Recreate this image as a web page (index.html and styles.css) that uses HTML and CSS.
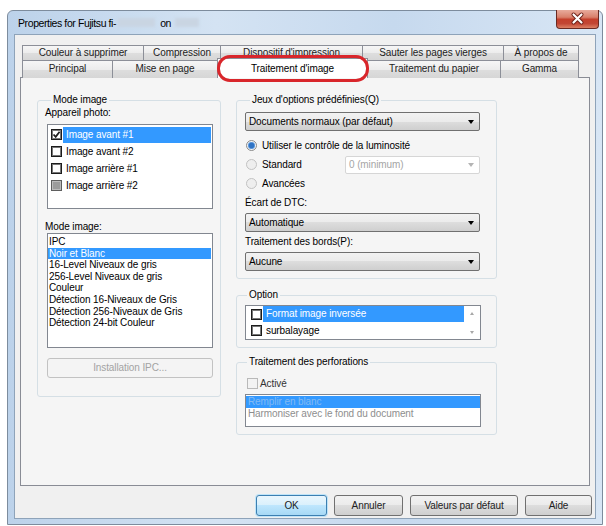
FILE: index.html
```html
<!DOCTYPE html>
<html>
<head lang="fr">
    <meta charset="UTF-8">
    <title>Properties</title>
    <link rel="stylesheet" href="styles.css">
</head>
<body>
<div class="window">
    <div class="titlebar">
        <span>Properties for Fujitsu fi-</span><span class="smudge s1"></span><span class="on">on</span><span class="smudge s2"></span>
        <div class="close">
            <svg width="43" height="19" viewBox="0 0 43 19">
                <path d="M17.5 5.5 L25.5 13.5 M25.5 5.5 L17.5 13.5" stroke="#6b1f16" stroke-width="4" stroke-linecap="round"/>
                <path d="M17.5 5.5 L25.5 13.5 M25.5 5.5 L17.5 13.5" stroke="#ffffff" stroke-width="2.2" stroke-linecap="round"/>
            </svg>
        </div>
    </div>

    <div class="client">
        <div class="tabs">
            <div class="tabrow r1">
                <div class="tab">Couleur à supprimer</div>
                <div class="tab">Compression</div>
                <div class="tab">Dispositif d'impression</div>
                <div class="tab">Sauter les pages vierges</div>
                <div class="tab">À propos de</div>
            </div>
            <div class="tabrow r2">
                <div class="tab">Principal</div>
                <div class="tab">Mise en page</div>
                <div class="tab on">Traitement d'image</div>
                <div class="tab">Traitement du papier</div>
                <div class="tab">Gamma</div>
            </div>
            <div class="mark"></div>
        </div>

        <div class="panel">
            <fieldset class="grp left">
                <legend>Mode image</legend>
                <div class="lbl first">Appareil photo:</div>
                <div class="list cams">
                    <div class="citem"><span class="chk checked"><svg width="9" height="9" viewBox="0 0 9 9"><path d="M1.5 4.5 L3.7 6.8 L7.6 1.8" fill="none" stroke="#1e1e1e" stroke-width="1.8"/></svg></span><span class="txt sel">Image avant #1</span></div>
                    <div class="citem"><span class="chk"></span><span class="txt">Image avant #2</span></div>
                    <div class="citem"><span class="chk"></span><span class="txt">Image arrière #1</span></div>
                    <div class="citem"><span class="chk grey"></span><span class="txt">Image arrière #2</span></div>
                </div>
                <div class="lbl">Mode image:</div>
                <div class="list modes">
                    <div class="mitem">IPC</div>
                    <div class="mitem sel">Noir et Blanc</div>
                    <div class="mitem">16-Level Niveaux de gris</div>
                    <div class="mitem">256-Level Niveaux de gris</div>
                    <div class="mitem">Couleur</div>
                    <div class="mitem">Détection 16-Niveaux de Gris</div>
                    <div class="mitem">Détection 256-Niveaux de Gris</div>
                    <div class="mitem">Détection 24-bit Couleur</div>
                </div>
                <div class="btn off">Installation IPC...</div>
            </fieldset>

            <div class="rcol">
                <fieldset class="grp presets">
                    <legend>Jeux d'options prédéfinies(Q)</legend>
                    <div class="combo first">Documents normaux (par défaut)</div>
                    <div class="rrow first"><span class="radio sel"></span>Utiliser le contrôle de la luminosité</div>
                    <div class="rrow"><span class="radio off"></span><span>Standard</span><div class="combo off small">0 (minimum)</div></div>
                    <div class="rrow"><span class="radio off"></span><span>Avancées</span></div>
                    <div class="lbl">Écart de DTC:</div>
                    <div class="combo">Automatique</div>
                    <div class="lbl">Traitement des bords(P):</div>
                    <div class="combo">Aucune</div>
                </fieldset>

                <fieldset class="grp option">
                    <legend>Option</legend>
                    <div class="list opts">
                        <div class="oitems">
                            <div class="oitem"><span class="chk"></span><span class="txt sel">Format image inversée</span></div>
                            <div class="oitem"><span class="chk"></span><span class="txt">surbalayage</span></div>
                        </div>
                        <div class="sbar"><span class="up"></span><span class="down"></span></div>
                    </div>
                </fieldset>

                <fieldset class="grp perf">
                    <legend>Traitement des perforations</legend>
                    <div class="crow"><span class="chk off"></span>Activé</div>
                    <div class="list holes">
                        <div class="hitem sel">Remplir en blanc</div>
                        <div class="hitem">Harmoniser avec le fond du document</div>
                    </div>
                </fieldset>
            </div>
        </div>

        <div class="buttons">
            <div class="btn ok">OK</div>
            <div class="btn cancel">Annuler</div>
            <div class="btn defaults">Valeurs par défaut</div>
            <div class="btn help">Aide</div>
        </div>
    </div>
</div>
</body>
</html>
```

FILE: styles.css
```css
*{
    padding:0;
    margin:0;
    box-sizing: border-box;
}
body{
    background: #ffffff;
    font-family: "Liberation Sans", Arial, sans-serif;
    font-size: 10px;
    letter-spacing: -0.1px;
    color: #000;
}

/* fenetre aero */
.window{
    margin: 10px 0 0 7px;
    width: 596px;
    height: 515px;
    border: 1px solid #7d8c9d;
    border-radius: 6px 6px 0 0;
    background: linear-gradient(to right, #bcd2ea, #d4e3f3 35%, #c6d9ee 65%, #d8e6f5);
    padding: 0 6px 5px;
    display: flex;
    flex-direction: column;
    position: relative;
}
.titlebar{
    height: 23px;
    display: flex;
    align-items: center;
    padding-left: 4px;
    font-size: 10.5px;
    letter-spacing: -0.4px;
}
.smudge{
    display: inline-block;
    height: 9px;
    background: #c9d5e2;
    filter: blur(1.5px);
}
.s1{ width: 37px; margin-left: 2px; }
.s2{ width: 24px; margin-left: 4px; }
.titlebar .on{ margin-left: 5px; }
.close{
    position: absolute;
    top: -1px;
    right: 3px;
    width: 43px;
    height: 19px;
    border: 1px solid #6a2a22;
    border-top: 0;
    border-radius: 0 0 4px 4px;
    background: linear-gradient(#e8ab9c, #d9806b 40%, #c4402c 52%, #c24634 75%, #dc8064);
}
.close svg{ display: block; margin: -1px 0 0 -1px; }

.client{
    flex: 1;
    background: #f0f0f0;
    border: 1px solid #8ea3b9;
    padding: 10px 5px 0;
    display: flex;
    flex-direction: column;
}

/* onglets */
.tabs{
    margin-left: 2px;
    position: relative;
}
.tabrow{
    display: grid;
}
.r1{
    grid-template-columns: 121px 77px 142px 141px 75px;
    height: 15px;
}
.r2{
    grid-template-columns: 90px 105px 150px 133px 78px;
    height: 17px;
}
.tab{
    border: 1px solid #8c8f98;
    border-bottom: 0;
    margin-right: -1px;
    background: linear-gradient(#f6f6f6, #ececec 50%, #dedede 50%, #d6d6d6);
    text-align: center;
    white-space: nowrap;
    color: #222;
}
.r1 .tab{ line-height: 13px; }
.r2 .tab{ line-height: 15px; }
.r2 .tab.on{
    background: #ffffff;
    margin-top: -2px;
    height: 20px;
    line-height: 19px;
    position: relative;
    z-index: 1;
    color: #000;
}
.mark{
    position: absolute;
    left: 195px;
    top: 10px;
    width: 152px;
    height: 27px;
    border: 3px solid #d9262b;
    border-radius: 13px;
    z-index: 2;
}

.panel{
    height: 409px;
    border: 1px solid #898c95;
    background: #f5f5f5;
    padding: 16px 0 0 16px;
    display: flex;
    gap: 15px;
}

/* group box */
.grp{
    border: 1px solid #d5dfe5;
    border-radius: 3px;
}
.grp legend{
    padding: 0 2px;
    margin-left: 4px;
    line-height: 12px;
}
.left{
    width: 184px;
    height: 303px;
    padding: 0 7px 0 9px;
}
.lbl{
    line-height: 12px;
    margin: 12px 0 0 -2px;
}
.lbl.first{
    margin: 1px 0 5px -2px;
}
.list{
    border: 1px solid #828790;
    background: #ffffff;
}
.cams{
    height: 85px;
    padding-top: 1px;
}
.citem{
    height: 17px;
    display: flex;
    align-items: center;
    padding-left: 3px;
}
.chk{
    width: 11px;
    height: 11px;
    flex: none;
    border: 1px solid #1c1c1c;
    box-shadow: inset 0 0 0 1px #777;
    background: #ffffff;
    display: flex;
    align-items: center;
    justify-content: center;
}
.chk.grey{
    background: #9b9b9b;
    border-color: #5e5e5e;
    box-shadow: inset 0 0 0 1px #bbb;
}
.chk.off{
    border-color: #b9b9b9;
    box-shadow: none;
    background: #f3f3f3;
}
.txt{
    height: 16px;
    line-height: 16px;
    padding-left: 3px;
    margin-left: 1px;
    flex: 1;
    margin-right: 1px;
    white-space: nowrap;
}
.sel{
    background: #3399ff;
    color: #ffffff;
}
.modes{
    height: 115px;
    padding-top: 2px;
}
.mitem{
    line-height: 11.6px;
    padding-left: 1px;
    margin-right: 1px;
    white-space: nowrap;
}
.btn{
    height: 21px;
    line-height: 19px;
    border: 1px solid #707070;
    border-radius: 3px;
    background: linear-gradient(#f2f2f2, #ebebeb 50%, #dddddd 50%, #cfcfcf);
    text-align: center;
}
.btn.off{
    margin-top: 10px;
    height: 20px;
    line-height: 18px;
    border-color: #c2c2c2;
    background: #f4f4f4;
    color: #a3a3a3;
}

/* colonne droite */
.rcol{
    display: flex;
    flex-direction: column;
}
.presets{
    width: 261px;
    padding: 0 16px 7px 8px;
}
.presets legend{ margin-left: 5px; }
.combo{
    height: 19px;
    border: 1px solid #707070;
    border-radius: 2px;
    background: linear-gradient(#f2f2f2, #ebebeb 50%, #dddddd 50%, #cfcfcf);
    display: flex;
    align-items: center;
    justify-content: space-between;
    padding: 0 5px 0 3px;
    margin-top: 4px;
}
.combo::after{
    content: "";
    border-left: 3.5px solid transparent;
    border-right: 3.5px solid transparent;
    border-top: 4px solid #000;
}
.combo.first{ margin-top: 6px; }
.combo.off{
    background: #ffffff;
    border-color: #d6d6d6;
    color: #a5a5a5;
    margin: 0 0 0 auto;
    width: 135px;
    height: 18px;
}
.combo.off::after{ border-top-color: #b4b4b4; }
.presets .lbl{ margin: 4px 0 0 0; }
.rrow{
    height: 19px;
    display: flex;
    align-items: center;
    padding-left: 1px;
}
.rrow.first{ margin-top: 5px; }
.radio{
    width: 11px;
    height: 11px;
    border-radius: 50%;
    border: 1px solid #8a8a8a;
    background: radial-gradient(circle, #2f73c4 0 2.5px, #88b6ea 3.5px, #eef2f6 4px);
    margin-right: 5px;
    flex: none;
}
.radio.off{
    border-color: #c2c2c2;
    background: #eeeeee;
}

.option{
    width: 261px;
    margin-top: 10px;
    padding: 0 15px 7px 8px;
}
.option legend, .perf legend{ margin-left: 2px; }
.opts{
    margin-top: 4px;
    height: 35px;
    display: flex;
}
.oitems{
    flex: 1;
}
.oitem{
    height: 16.5px;
    display: flex;
    align-items: center;
    padding-left: 5px;
}
.oitem .txt{ margin-right: 0; }
.sbar{
    width: 16px;
    display: flex;
    flex-direction: column;
    justify-content: space-between;
    align-items: center;
    padding: 6px 0 5px;
}
.up, .down{
    border-left: 2.5px solid transparent;
    border-right: 2.5px solid transparent;
}
.up{ border-bottom: 3px solid #a8a8a8; }
.down{ border-top: 3px solid #a8a8a8; }

.perf{
    width: 261px;
    margin-top: 8px;
    padding: 0 15px 7px 8px;
}
.crow{
    height: 14px;
    margin-top: 8px;
    display: flex;
    align-items: center;
    gap: 2px;
    padding-left: 2px;
    color: #333;
}
.holes{
    margin-top: 4px;
    height: 33px;
    padding-top: 1px;
}
.hitem{
    line-height: 12px;
    padding-left: 2px;
    color: #8e8e8e;
    white-space: nowrap;
}
.hitem.sel{
    color: #83b9f3;
}

/* boutons */
.buttons{
    display: flex;
    justify-content: flex-end;
    gap: 7px;
    margin: 9px -2px 0 0;
}
.buttons .btn{ color: #222; }
.ok{
    width: 71px;
    border-color: #3c7fb1;
    background: linear-gradient(#eaf6fd, #d9f0fc 50%, #bee6fd 50%, #a7d9f5);
    box-shadow: 0 0 0 1px #bfe4f8;
}
.cancel{ width: 69px; }
.defaults{ width: 108px; }
.help{ width: 67px; }
```
